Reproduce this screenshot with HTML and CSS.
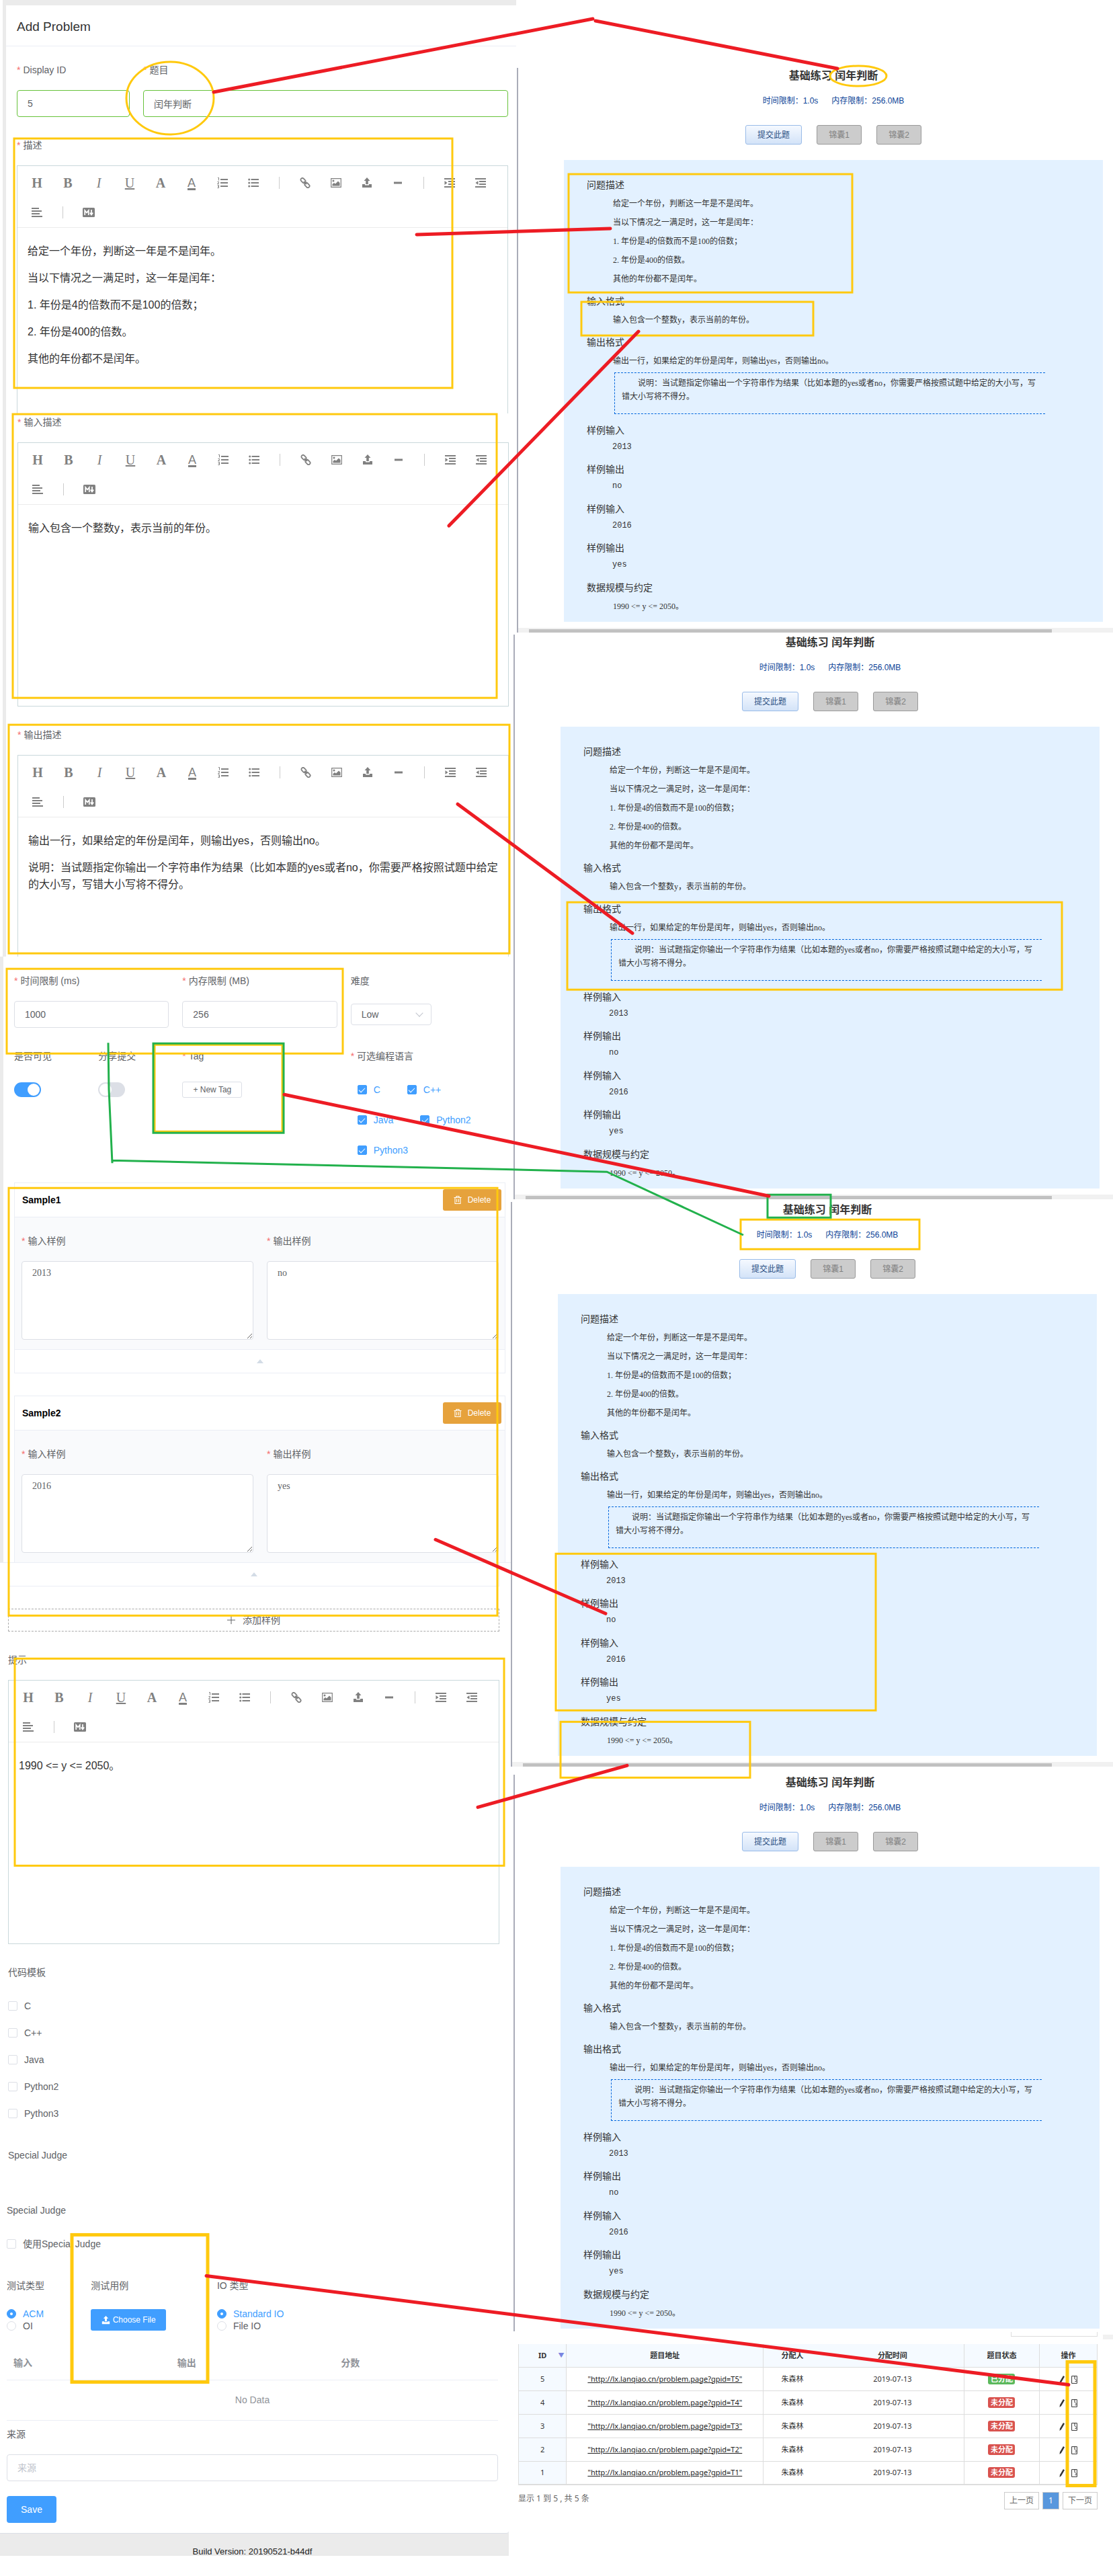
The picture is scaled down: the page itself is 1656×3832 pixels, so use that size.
FILE: index.html
```html
<!DOCTYPE html>
<html lang="zh-CN">
<head>
<meta charset="utf-8">
<title>Add Problem</title>
<link rel="stylesheet" href="styles.css">
</head>
<body>
<svg class="defs" aria-hidden="true">
  <symbol id="i-ol" viewBox="0 0 16 16"><path d="M5 2h11v2H5zM5 7h11v2H5zM5 12h11v2H5z"/><path d="M1 .5h1.500v4M.5 6.500h2v1.500l-2 1.500h2.200M.5 11.500h2v4h-2M1 13.500h1.500" fill="none" stroke="currentColor"/></symbol>
  <symbol id="i-ul" viewBox="0 0 16 16"><path d="M4.500 2H16v2H4.500zM4.500 7H16v2H4.500zM4.500 12H16v2H4.500z"/><circle cx="1.700" cy="3" r="1.500"/><circle cx="1.700" cy="8" r="1.500"/><circle cx="1.700" cy="13" r="1.500"/></symbol>
  <symbol id="i-link" viewBox="0 0 16 16"><g fill="none" stroke="currentColor" stroke-width="1.800"><rect x="1" y="2" width="8" height="5" rx="2.500" transform="rotate(45 5 4.500)"/><rect x="7" y="9" width="8" height="5" rx="2.500" transform="rotate(45 11 11.500)"/><path d="M6 6l4 4"/></g></symbol>
  <symbol id="i-image" viewBox="0 0 16 16"><path d="M.7 1.700h14.600v12.600H.7z" fill="none" stroke="currentColor" stroke-width="1.200"/><circle cx="4" cy="5" r="1.500"/><path d="M2.500 12.500V10L5 8l2 1.500L11 5.500l2.500 2.500v4.500z"/></symbol>
  <symbol id="i-upload" viewBox="0 0 16 16"><path d="M8 0l4.500 5H9.800v5H6.200V5H3.500zM1 10h4v1.500h6V10h4v5H1z"/></symbol>
  <symbol id="i-minus" viewBox="0 0 16 16"><path d="M2 6.500h12v3H2z"/></symbol>
  <symbol id="i-indent" viewBox="0 0 16 16"><path d="M0 1h16v2H0zM6 5h10v2H6zM6 9h10v2H6zM0 13h16v2H0zM.5 5l4 3-4 3z"/></symbol>
  <symbol id="i-outdent" viewBox="0 0 16 16"><path d="M0 1h16v2H0zM6 5h10v2H6zM6 9h10v2H6zM0 13h16v2H0zM4.500 5l-4 3 4 3z"/></symbol>
  <symbol id="i-align" viewBox="0 0 16 16"><path d="M0 1h11v2H0zM0 5h15v2H0zM0 9h12v2H0zM0 13h16v2H0z"/></symbol>
  <symbol id="i-md" viewBox="0 0 18 14"><rect width="18" height="14" rx="1.500"/><path d="M3.200 11V4l2.800 3.500L8.800 4v7M13 3v7M10.800 7.500l2.200 3 2.200-3" fill="none" stroke="#fff" stroke-width="1.700"/></symbol>
  <symbol id="i-trash" viewBox="0 0 12 12"><path d="M.5 2.500h11M4 2.500v-2h4v2M2 2.500v9h8v-9M4.600 4.500v5M7.400 4.500v5" fill="none" stroke="currentColor" stroke-width="1.100"/></symbol>
  <symbol id="i-pencil" viewBox="0 0 8 12"><path d="M6 0l2 1.500L3 10 .5 12 1 8.500z"/></symbol>
  <symbol id="i-page" viewBox="0 0 9 12"><path d="M.6.600h7.800v10.800H.6zM5 .6v4M5 4.500l3 3M5.500 8.500h2" fill="none" stroke="currentColor"/></symbol>
</svg>

<main class="board">
<form class="editor-side">

  <section class="strip strip-first">
    <header class="card-head"><h1>Add Problem</h1></header>
    <div class="strip-body">
      <div class="id-row">
        <div class="item"><label class="label req" for="pid">Display ID</label><input class="field ok" id="pid" value="5"></div>
        <div class="item"><label class="label req" for="ptitle">题目</label><input class="field ok" id="ptitle" value="闰年判断"></div>
      </div>
      <div class="label req">描述</div>
      <div class="editor open-end">
        <div class="toolbar">
          <button type="button"><b>H</b></button><button type="button"><b>B</b></button><button type="button"><i>I</i></button><button type="button"><u>U</u></button><button type="button"><b>A</b></button><button type="button" class="color">A</button>
          <button type="button" aria-label="ordered list"><svg><use href="#i-ol"/></svg></button><button type="button" aria-label="list"><svg><use href="#i-ul"/></svg></button><span class="sep"></span>
          <button type="button" aria-label="link"><svg><use href="#i-link"/></svg></button><button type="button" aria-label="image"><svg><use href="#i-image"/></svg></button><button type="button" aria-label="upload"><svg><use href="#i-upload"/></svg></button><button type="button" aria-label="rule"><svg><use href="#i-minus"/></svg></button><span class="sep"></span>
          <button type="button" aria-label="indent"><svg><use href="#i-indent"/></svg></button><button type="button" aria-label="outdent"><svg><use href="#i-outdent"/></svg></button><button type="button" aria-label="align"><svg><use href="#i-align"/></svg></button><span class="sep"></span>
          <button type="button" aria-label="markdown"><svg class="md"><use href="#i-md"/></svg></button>
        </div>
        <div class="content content-mid">
          <p>给定一个年份，判断这一年是不是闰年。</p>
          <p>当以下情况之一满足时，这一年是闰年：</p>
          <p>1. 年份是4的倍数而不是100的倍数；</p>
          <p>2. 年份是400的倍数。</p>
          <p>其他的年份都不是闰年。</p>
        </div>
      </div>
    </div>
  </section>

  <section class="strip strip-second">
    <div class="label label-cut req">输入描述</div>
    <div class="editor">
      <div class="toolbar">
        <button type="button"><b>H</b></button><button type="button"><b>B</b></button><button type="button"><i>I</i></button><button type="button"><u>U</u></button><button type="button"><b>A</b></button><button type="button" class="color">A</button>
        <button type="button" aria-label="ordered list"><svg><use href="#i-ol"/></svg></button><button type="button" aria-label="list"><svg><use href="#i-ul"/></svg></button><span class="sep"></span>
        <button type="button" aria-label="link"><svg><use href="#i-link"/></svg></button><button type="button" aria-label="image"><svg><use href="#i-image"/></svg></button><button type="button" aria-label="upload"><svg><use href="#i-upload"/></svg></button><button type="button" aria-label="rule"><svg><use href="#i-minus"/></svg></button><span class="sep"></span>
        <button type="button" aria-label="indent"><svg><use href="#i-indent"/></svg></button><button type="button" aria-label="outdent"><svg><use href="#i-outdent"/></svg></button><button type="button" aria-label="align"><svg><use href="#i-align"/></svg></button><span class="sep"></span>
        <button type="button" aria-label="markdown"><svg class="md"><use href="#i-md"/></svg></button>
      </div>
      <div class="content"><p>输入包含一个整数y，表示当前的年份。</p></div>
    </div>
    <div class="label req after">输出描述</div>
    <div class="editor open-end">
      <div class="toolbar">
        <button type="button"><b>H</b></button><button type="button"><b>B</b></button><button type="button"><i>I</i></button><button type="button"><u>U</u></button><button type="button"><b>A</b></button><button type="button" class="color">A</button>
        <button type="button" aria-label="ordered list"><svg><use href="#i-ol"/></svg></button><button type="button" aria-label="list"><svg><use href="#i-ul"/></svg></button><span class="sep"></span>
        <button type="button" aria-label="link"><svg><use href="#i-link"/></svg></button><button type="button" aria-label="image"><svg><use href="#i-image"/></svg></button><button type="button" aria-label="upload"><svg><use href="#i-upload"/></svg></button><button type="button" aria-label="rule"><svg><use href="#i-minus"/></svg></button><span class="sep"></span>
        <button type="button" aria-label="indent"><svg><use href="#i-indent"/></svg></button><button type="button" aria-label="outdent"><svg><use href="#i-outdent"/></svg></button><button type="button" aria-label="align"><svg><use href="#i-align"/></svg></button><span class="sep"></span>
        <button type="button" aria-label="markdown"><svg class="md"><use href="#i-md"/></svg></button>
      </div>
      <div class="content content-short">
        <p>输出一行，如果给定的年份是闰年，则输出yes，否则输出no。</p>
        <p>说明：当试题指定你输出一个字符串作为结果（比如本题的yes或者no，你需要严格按照试题中给定的大小写，写错大小写将不得分。</p>
      </div>
    </div>
  </section>

  <section class="strip strip-third">
    <div class="grid6">
      <div class="span2"><label class="label req" for="time">时间限制 (ms)</label><input class="field" id="time" value="1000"></div>
      <div class="span2"><label class="label req" for="mem">内存限制 (MB)</label><input class="field" id="mem" value="256"></div>
      <div class="span2"><label class="label" for="level">难度</label>
        <div class="line"><span class="select-wrap"><select id="level"><option>Low</option></select></span></div></div>
    </div>
    <div class="grid6 after">
      <div><label class="label" for="visible">是否可见</label><div class="line"><input class="switch" type="checkbox" id="visible" checked></div></div>
      <div><label class="label" for="share">分享提交</label><div class="line"><input class="switch" type="checkbox" id="share"></div></div>
      <div class="span2"><div class="label req">Tag</div><div class="line"><button type="button" class="btn-tag">+ New Tag</button></div></div>
      <div class="span2"><div class="label req">可选编程语言</div>
        <div class="langs">
          <label class="check on"><input type="checkbox" checked>C</label><label class="check on"><input type="checkbox" checked>C++</label>
          <label class="check on"><input type="checkbox" checked>Java</label><label class="check on"><input type="checkbox" checked>Python2</label>
          <label class="check on"><input type="checkbox" checked>Python3</label>
        </div></div>
    </div>
    <div class="accordion">
      <div class="acc-head"><h2>Sample1</h2><button type="button" class="btn-del"><svg><use href="#i-trash"/></svg>Delete</button></div>
      <div class="acc-body">
        <div><label class="label req" for="in1">输入样例</label><textarea id="in1">2013</textarea></div>
        <div><label class="label req" for="out1">输出样例</label><textarea id="out1">no</textarea></div>
      </div>
      <div class="acc-foot"><span class="tri"></span></div>
    </div>
    <div class="accordion acc-last">
      <div class="acc-head"><h2>Sample2</h2><button type="button" class="btn-del"><svg><use href="#i-trash"/></svg>Delete</button></div>
      <div class="acc-body">
        <div><label class="label req" for="in2">输入样例</label><textarea id="in2">2016</textarea></div>
        <div><label class="label req" for="out2">输出样例</label><textarea id="out2">yes</textarea></div>
      </div>
    </div>
  </section>

  <section class="strip strip-fourth">
    <div class="acc-foot acc-tail"><span class="tri"></span></div>
    <button type="button" class="btn-add"><svg viewBox="0 0 12 12"><path d="M6 0v12M0 6h12" stroke="currentColor"/></svg>添加样例</button>
    <div class="label after">提示</div>
    <div class="editor">
      <div class="toolbar">
        <button type="button"><b>H</b></button><button type="button"><b>B</b></button><button type="button"><i>I</i></button><button type="button"><u>U</u></button><button type="button"><b>A</b></button><button type="button" class="color">A</button>
        <button type="button" aria-label="ordered list"><svg><use href="#i-ol"/></svg></button><button type="button" aria-label="list"><svg><use href="#i-ul"/></svg></button><span class="sep"></span>
        <button type="button" aria-label="link"><svg><use href="#i-link"/></svg></button><button type="button" aria-label="image"><svg><use href="#i-image"/></svg></button><button type="button" aria-label="upload"><svg><use href="#i-upload"/></svg></button><button type="button" aria-label="rule"><svg><use href="#i-minus"/></svg></button><span class="sep"></span>
        <button type="button" aria-label="indent"><svg><use href="#i-indent"/></svg></button><button type="button" aria-label="outdent"><svg><use href="#i-outdent"/></svg></button><button type="button" aria-label="align"><svg><use href="#i-align"/></svg></button><span class="sep"></span>
        <button type="button" aria-label="markdown"><svg class="md"><use href="#i-md"/></svg></button>
      </div>
      <div class="content"><p>1990 &lt;= y &lt;= 2050。</p></div>
    </div>
    <div class="label after">代码模板</div>
    <div class="stack">
      <label class="check"><input type="checkbox">C</label>
      <label class="check"><input type="checkbox">C++</label>
      <label class="check"><input type="checkbox">Java</label>
      <label class="check"><input type="checkbox">Python2</label>
      <label class="check"><input type="checkbox">Python3</label>
    </div>
    <div class="label after">Special Judge</div>
  </section>

  <section class="strip-fifth">
    <div class="last-card">
      <div class="label">Special Judge</div>
      <div class="stack"><label class="check"><input type="checkbox">使用Special Judge</label></div>
      <div class="grid12 after">
        <div class="c2"><div class="label">测试类型</div>
          <div class="radios"><label class="check on"><input type="radio" name="rule" checked>ACM</label><label class="check"><input type="radio" name="rule">OI</label></div></div>
        <div class="c3"><div class="label">测试用例</div>
          <button type="button" class="btn-file"><svg><use href="#i-upload"/></svg>Choose File</button></div>
        <div class="c7"><div class="label">IO 类型</div>
          <div class="radios"><label class="check on"><input type="radio" name="io" checked>Standard IO</label><label class="check"><input type="radio" name="io">File IO</label></div></div>
      </div>
      <table class="cases">
        <thead><tr><th>输入</th><th>输出</th><th>分数</th></tr></thead>
        <tbody><tr><td colspan="3">No Data</td></tr></tbody>
      </table>
      <label class="label" for="source">来源</label>
      <input class="field" id="source" placeholder="来源">
      <button type="button" class="btn-save">Save</button>
    </div>
    <footer>Build Version: 20190521-b44df</footer>
  </section>
</form>

<div class="source-side">
  <article class="frame frame-a">
    <div class="sheet">
      <h2>基础练习 闰年判断</h2>
      <div class="limits"><span>时间限制：1.0s</span><span>内存限制：256.0MB</span></div>
      <div class="actions"><button type="button">提交此题</button><button type="button" disabled>锦囊1</button><button type="button" disabled>锦囊2</button></div>
      <div class="problem">
        <h3>问题描述</h3>
        <div class="para"><p>给定一个年份，判断这一年是不是闰年。</p><p>当以下情况之一满足时，这一年是闰年：</p><p>1. 年份是4的倍数而不是100的倍数；</p><p>2. 年份是400的倍数。</p><p>其他的年份都不是闰年。</p></div>
        <h3>输入格式</h3>
        <div class="para"><p>输入包含一个整数y，表示当前的年份。</p></div>
        <h3>输出格式</h3>
        <div class="para"><p>输出一行，如果给定的年份是闰年，则输出yes，否则输出no。</p></div>
        <div class="note">说明：当试题指定你输出一个字符串作为结果（比如本题的yes或者no，你需要严格按照试题中给定的大小写，写错大小写将不得分。</div>
        <h3>样例输入</h3><pre>2013</pre>
        <h3>样例输出</h3><pre class="out">no</pre>
        <h3>样例输入</h3><pre>2016</pre>
        <h3>样例输出</h3><pre class="out">yes</pre>
        <h3>数据规模与约定</h3>
        <div class="para"><p>1990 &lt;= y &lt;= 2050。</p></div>
      </div>
    </div>
    <div class="scroll"><span></span></div>
  </article>

  <article class="frame frame-b">
    <div class="sheet">
      <h2>基础练习 闰年判断</h2>
      <div class="limits"><span>时间限制：1.0s</span><span>内存限制：256.0MB</span></div>
      <div class="actions"><button type="button">提交此题</button><button type="button" disabled>锦囊1</button><button type="button" disabled>锦囊2</button></div>
      <div class="problem">
        <h3>问题描述</h3>
        <div class="para"><p>给定一个年份，判断这一年是不是闰年。</p><p>当以下情况之一满足时，这一年是闰年：</p><p>1. 年份是4的倍数而不是100的倍数；</p><p>2. 年份是400的倍数。</p><p>其他的年份都不是闰年。</p></div>
        <h3>输入格式</h3>
        <div class="para"><p>输入包含一个整数y，表示当前的年份。</p></div>
        <h3>输出格式</h3>
        <div class="para"><p>输出一行，如果给定的年份是闰年，则输出yes，否则输出no。</p></div>
        <div class="note">说明：当试题指定你输出一个字符串作为结果（比如本题的yes或者no，你需要严格按照试题中给定的大小写，写错大小写将不得分。</div>
        <h3>样例输入</h3><pre>2013</pre>
        <h3>样例输出</h3><pre class="out">no</pre>
        <h3>样例输入</h3><pre>2016</pre>
        <h3>样例输出</h3><pre class="out">yes</pre>
        <h3>数据规模与约定</h3>
        <div class="para"><p>1990 &lt;= y &lt;= 2050。</p></div>
      </div>
    </div>
    <div class="scroll"><span></span></div>
  </article>

  <article class="frame frame-c">
    <div class="sheet">
      <h2>基础练习 闰年判断</h2>
      <div class="limits"><span>时间限制：1.0s</span><span>内存限制：256.0MB</span></div>
      <div class="actions"><button type="button">提交此题</button><button type="button" disabled>锦囊1</button><button type="button" disabled>锦囊2</button></div>
      <div class="problem">
        <h3>问题描述</h3>
        <div class="para"><p>给定一个年份，判断这一年是不是闰年。</p><p>当以下情况之一满足时，这一年是闰年：</p><p>1. 年份是4的倍数而不是100的倍数；</p><p>2. 年份是400的倍数。</p><p>其他的年份都不是闰年。</p></div>
        <h3>输入格式</h3>
        <div class="para"><p>输入包含一个整数y，表示当前的年份。</p></div>
        <h3>输出格式</h3>
        <div class="para"><p>输出一行，如果给定的年份是闰年，则输出yes，否则输出no。</p></div>
        <div class="note">说明：当试题指定你输出一个字符串作为结果（比如本题的yes或者no，你需要严格按照试题中给定的大小写，写错大小写将不得分。</div>
        <h3>样例输入</h3><pre>2013</pre>
        <h3>样例输出</h3><pre class="out">no</pre>
        <h3>样例输入</h3><pre>2016</pre>
        <h3>样例输出</h3><pre class="out">yes</pre>
        <h3>数据规模与约定</h3>
        <div class="para"><p>1990 &lt;= y &lt;= 2050。</p></div>
      </div>
    </div>
    <div class="scroll"><span></span></div>
  </article>

  <article class="frame frame-d">
    <div class="sheet">
      <h2>基础练习 闰年判断</h2>
      <div class="limits"><span>时间限制：1.0s</span><span>内存限制：256.0MB</span></div>
      <div class="actions"><button type="button">提交此题</button><button type="button" disabled>锦囊1</button><button type="button" disabled>锦囊2</button></div>
      <div class="problem">
        <h3>问题描述</h3>
        <div class="para"><p>给定一个年份，判断这一年是不是闰年。</p><p>当以下情况之一满足时，这一年是闰年：</p><p>1. 年份是4的倍数而不是100的倍数；</p><p>2. 年份是400的倍数。</p><p>其他的年份都不是闰年。</p></div>
        <h3>输入格式</h3>
        <div class="para"><p>输入包含一个整数y，表示当前的年份。</p></div>
        <h3>输出格式</h3>
        <div class="para"><p>输出一行，如果给定的年份是闰年，则输出yes，否则输出no。</p></div>
        <div class="note">说明：当试题指定你输出一个字符串作为结果（比如本题的yes或者no，你需要严格按照试题中给定的大小写，写错大小写将不得分。</div>
        <h3>样例输入</h3><pre>2013</pre>
        <h3>样例输出</h3><pre class="out">no</pre>
        <h3>样例输入</h3><pre>2016</pre>
        <h3>样例输出</h3><pre class="out">yes</pre>
        <h3>数据规模与约定</h3>
        <div class="para"><p>1990 &lt;= y &lt;= 2050。</p></div>
      </div>
    </div>
  </article>

  <div class="cut-row"><span class="cut-box"></span><span class="cut-track"></span></div>

  <section class="listing">
    <table class="tasks">
      <colgroup><col class="w-id"><col class="w-url"><col class="w-who"><col class="w-date"><col class="w-state"><col class="w-ops"></colgroup>
      <thead><tr><th>ID<span class="sort">▼</span></th><th>题目地址</th><th>分配人</th><th>分配时间</th><th>题目状态</th><th>操作</th></tr></thead>
      <tbody>
        <tr><td>5</td><td><a href="#t5">"http://lx.lanqiao.cn/problem.page?gpid=T5"</a></td><td>朱森林</td><td>2019-07-13</td><td><span class="badge done">已分配</span></td><td><svg class="pencil"><use href="#i-pencil"/></svg><svg class="pageicon"><use href="#i-page"/></svg></td></tr>
        <tr><td>4</td><td><a href="#t4">"http://lx.lanqiao.cn/problem.page?gpid=T4"</a></td><td>朱森林</td><td>2019-07-13</td><td><span class="badge">未分配</span></td><td><svg class="pencil"><use href="#i-pencil"/></svg><svg class="pageicon"><use href="#i-page"/></svg></td></tr>
        <tr><td>3</td><td><a href="#t3">"http://lx.lanqiao.cn/problem.page?gpid=T3"</a></td><td>朱森林</td><td>2019-07-13</td><td><span class="badge">未分配</span></td><td><svg class="pencil"><use href="#i-pencil"/></svg><svg class="pageicon"><use href="#i-page"/></svg></td></tr>
        <tr><td>2</td><td><a href="#t2">"http://lx.lanqiao.cn/problem.page?gpid=T2"</a></td><td>朱森林</td><td>2019-07-13</td><td><span class="badge">未分配</span></td><td><svg class="pencil"><use href="#i-pencil"/></svg><svg class="pageicon"><use href="#i-page"/></svg></td></tr>
        <tr><td>1</td><td><a href="#t1">"http://lx.lanqiao.cn/problem.page?gpid=T1"</a></td><td>朱森林</td><td>2019-07-13</td><td><span class="badge">未分配</span></td><td><svg class="pencil"><use href="#i-pencil"/></svg><svg class="pageicon"><use href="#i-page"/></svg></td></tr>
      </tbody>
    </table>
    <div class="pager"><span>显示 1 到 5 , 共 5 条</span><nav><a href="#prev">上一页</a><a href="#p1" class="current">1</a><a href="#next">下一页</a></nav></div>
  </section>
</div>

<svg class="marks" viewBox="0 0 1656 3832" preserveAspectRatio="none" aria-hidden="true">
  <g class="yellow">
    <ellipse cx="253" cy="146" rx="65" ry="54"/>
    <rect x="21" y="206" width="652" height="371"/>
    <rect x="19" y="616" width="720" height="422"/>
    <rect x="13" y="1078" width="745" height="340"/>
    <rect x="10" y="1441" width="500" height="126"/>
    <rect x="230" y="1554" width="190" height="129"/>
    <rect x="13" y="1767" width="727" height="636"/>
    <rect x="22" y="2467" width="728" height="308"/>
    <ellipse cx="1277" cy="113" rx="42" ry="15"/>
    <rect x="846" y="259" width="422" height="176"/>
    <rect x="865" y="449" width="345" height="50"/>
    <rect x="844" y="1342" width="736" height="130"/>
    <rect x="1102" y="1814" width="266" height="44"/>
    <rect x="827" y="2311" width="476" height="233"/>
    <rect x="834" y="2561" width="282" height="83"/>
    <rect class="thick" x="107" y="3324" width="202" height="219"/>
    <rect class="thick" x="1588" y="3513" width="41" height="184"/>
  </g>
  <g class="green">
    <rect x="228" y="1552" width="194" height="133"/>
    <rect x="1142" y="1777" width="94" height="34"/>
    <path d="M161 1551L162 1620L167 1730V1726L780 1740L903 1743L1106 1837"/>
  </g>
  <g class="red">
    <path d="M318 137L882 28M886 31L1246 102M620 349L908 340M668 782L950 493M681 1196L941 1388M423 1628L1144 1779M648 2290L901 2400M711 2688L933 2626M307 3385L1590 3547"/>
  </g>
</svg>
</main>
</body>
</html>
```
FILE: styles.css
```css
* { box-sizing: border-box; }
body, h1, h2, h3, p, pre { margin: 0; }
body { background: #fff; color: #606266; font: 14px/20px "Liberation Sans", "Noto Sans CJK SC", sans-serif; }
button, input, select, textarea { font: inherit; color: inherit; margin: 0; }
button { display: flex; align-items: center; justify-content: center; padding: 0; }
svg { fill: currentColor; }
.defs { display: none; }

.board { position: relative; display: grid; grid-template-columns: minmax(0, 760fr) minmax(0, 896fr); align-items: start; padding-bottom: 31px; }
.marks { position: absolute; inset: 0; width: 100%; height: 100%; fill: none; pointer-events: none; stroke-width: 3; }
.marks .yellow { stroke: #ffc90e; }
.marks .green { stroke: #22b14c; }
.marks .red { stroke: #ed1c24; stroke-width: 5; stroke-linecap: round; }
.marks .thick { stroke-width: 5; }

/* strips of the form */
.strip { border-left: 5px solid #ebebeb; background: #fff; }
.strip-first { margin: 0 -8px 0 4px; border-top: 8px solid #ebebeb; }
.card-head { height: 61px; padding-left: 16px; border-bottom: 1px solid #ebeef5; }
.card-head h1 { color: #333; font-size: 19px; line-height: 64px; font-weight: 400; }
.strip-body { padding: 15px 12px 0 16px; }
.strip-second { margin-left: 4px; padding: 0 3px 0 17px; }
.strip-third { padding: 16px 8px 0 16px; }
.strip-fourth { border-left: 0; border-top: 1px solid #ebeef5; padding: 0 17px 32px 12px; }
.strip-fifth { margin-right: 3px; background: #ebebeb; }
.last-card { padding: 0 16px 15px 10px; background: #fff; border-bottom: 1px solid #dcdfe6; border-bottom-right-radius: 4px; }
.strip-fifth footer { height: 33px; overflow: hidden; padding: 17px 6px 0 0; color: #222; font-size: 13px; text-align: center; }

.after { margin-top: 22px; }
.label { display: block; padding-bottom: 10px; line-height: 40px; }
.label-cut { padding-bottom: 17px; line-height: 26px; }
.req::before { content: "*"; margin-right: 4px; color: #f56c6c; }
.field { display: block; width: 100%; height: 40px; padding: 0 15px; border: 1px solid #dcdfe6; border-radius: 4px; background: #fff; outline: 0; }
.field.ok { border-color: #67c23a; }
.field::placeholder { color: #c0c4cc; }
.id-row { display: grid; grid-template-columns: 168fr 543fr; gap: 20px; margin-bottom: 22px; }
.grid6 { display: grid; grid-template-columns: repeat(6, minmax(0, 1fr)); column-gap: 20px; }
.span2 { grid-column: span 2; }
.grid12 { display: grid; grid-template-columns: repeat(12, minmax(0, 1fr)); column-gap: 20px; }
.c2 { grid-column: span 2; }
.c3 { grid-column: span 3; }
.c7 { grid-column: span 7; }
.line { display: flex; align-items: center; height: 40px; }

/* rich text editor */
.editor { border: 1px solid #c9d8db; color: #333; font-size: 16px; }
.open-end { border-bottom: 0; }
.toolbar { display: flex; flex-wrap: wrap; padding: 3px 6px 0; border-bottom: 1px solid #ebebeb; color: #808080; }
.toolbar button { width: 46px; height: 44px; border: 0; background: none; font: 20px/20px "Liberation Serif", serif; }
.toolbar .color { font-family: "Liberation Sans", sans-serif; font-size: 18px; text-decoration: underline; text-decoration-thickness: 3px; text-underline-offset: 2px; }
.toolbar svg { width: 16px; height: 16px; }
.toolbar .md { width: 18px; height: 14px; }
.sep { width: 31px; height: 44px; background: linear-gradient(#ccc, #ccc) center / 1px 18px no-repeat; }
.content { min-height: 299px; padding: 22px 15px 0; }
.content-mid { min-height: 276px; }
.content-short { min-height: 207px; }
.content p { margin-bottom: 15px; line-height: 25px; }

/* controls */
.select-wrap { position: relative; width: 120px; }
.select-wrap select { width: 100%; height: 32px; padding: 0 15px; border: 1px solid #dcdfe6; border-radius: 4px; background: #fff; appearance: none; }
.select-wrap::after { content: ""; position: absolute; right: 14px; top: 10px; width: 7px; height: 7px; border: solid #c0c4cc; border-width: 0 1px 1px 0; transform: rotate(45deg); }
.switch { appearance: none; display: flex; width: 40px; height: 22px; padding: 2px; border-radius: 11px; background: #dcdfe6; }
.switch::after { content: ""; width: 18px; height: 18px; border-radius: 50%; background: #fff; }
.switch:checked { justify-content: flex-end; background: #409eff; }
.btn-tag { width: 89px; height: 24px; border: 1px solid #dcdfe6; border-radius: 3px; background: #fff; font-size: 12px; }
.check { display: inline-flex; align-items: center; gap: 10px; line-height: 20px; }
.check.on { color: #409eff; }
.check input { appearance: none; display: grid; place-items: center; width: 14px; height: 14px; border: 1px solid #dcdfe6; border-radius: 2px; background: #fff; }
.check input:checked { border-color: #409eff; background: #409eff; }
.check input:checked::after { content: ""; width: 4px; height: 8px; margin-bottom: 2px; border: solid #fff; border-width: 0 1px 1px 0; transform: rotate(45deg); }
.check input[type="radio"] { border-radius: 50%; }
.check input[type="radio"]:checked::after { width: 4px; height: 4px; margin: 0; border: 0; border-radius: 50%; background: #fff; }
.langs { display: flex; flex-wrap: wrap; gap: 5px 40px; padding: 0 20px 0 10px; }
.langs .check { height: 40px; }
.stack { display: grid; }
.stack .check { height: 40px; }
.radios { display: grid; padding-top: 3px; }
.radios .check { line-height: 18px; }

/* sample blocks */
.accordion { margin-top: 28px; border: 1px solid #ebeef5; }
.acc-last { margin-top: 33px; border-bottom: 0; }
.acc-head { display: flex; align-items: center; justify-content: space-between; height: 51px; padding: 0 5px 0 11px; border-bottom: 1px solid #ebeef5; }
.acc-head h2 { color: #000; font-size: 14px; }
.btn-del { gap: 9px; width: 87px; height: 32px; border: 0; border-radius: 3px; background: #e6a23c; color: #fff; font-size: 12px; }
.btn-del svg { width: 12px; height: 12px; }
.acc-body { display: grid; grid-template-columns: 1fr 1fr; gap: 20px; padding: 15px 9px 14px 10px; background: #f9fafc; }
.acc-body textarea { display: block; width: 100%; height: 117px; padding: 7px 15px; border: 1px solid #dcdfe6; border-radius: 4px; background: #fff; font: 14px/20px "Liberation Serif", serif; }
.acc-foot { display: grid; place-items: center; height: 35px; border-top: 1px solid #ebeef5; }
.tri { border: solid transparent; border-width: 0 5px 6px; border-bottom-color: #d3dce6; }
.acc-tail { border: solid #ebeef5; border-width: 0 1px 1px; }
.btn-add { gap: 11px; width: 100%; height: 34px; margin-top: 33px; border: 1px dashed #aaa; background: #fff; }
.btn-add svg { width: 12px; height: 12px; }

.btn-file { gap: 4px; width: 112px; height: 32px; margin: 5px 0 24px; border: 0; border-radius: 3px; background: #409eff; color: #fff; font-size: 12px; }
.btn-file svg { width: 13px; height: 13px; }
.cases { width: 100%; border-collapse: collapse; table-layout: fixed; color: #909399; }
.cases th { height: 49px; padding: 0 10px; border-bottom: 1px solid #ebeef5; text-align: left; }
.cases td { height: 60px; padding: 0; border-bottom: 1px solid #ebeef5; text-align: center; }
.btn-save { width: 74px; height: 40px; margin-top: 22px; border: 0; border-radius: 4px; background: #409eff; color: #fff; }

/* source problem pages */
.source-side { padding-top: 101px; color: #333; }
.frame { border-left: 2px solid #a9acb8; }
.frame-a { margin: 0 0 3px 9px; }
.frame-b { margin: 0 0 4px 4px; }
.frame-c { margin: 0 0 12px; }
.frame-d { margin: 0 0 1px 4px; padding-bottom: 4px; }
.sheet { margin: 0 15px 0 68px; }
.frame-b .sheet, .frame-d .sheet { margin-right: 20px; }
.frame-c .sheet { margin-right: 24px; }
.sheet h2 { font-size: 16px; line-height: 24px; text-align: center; }
.limits { display: flex; justify-content: center; gap: 20px; margin: 15px 0 26px; color: #0b4397; font-size: 12px; }
.actions { display: flex; justify-content: center; gap: 22px; margin-bottom: 23px; }
.actions button { width: 84px; height: 29px; border: 1px solid #99bbe8; border-radius: 3px; background: linear-gradient(#f5f9ff, #d3e3f8); color: #2b5083; font-size: 12px; }
.actions button:disabled { width: 67px; border-color: #999; background: #ccc; color: #808080; }
.problem { padding: 28px 0 9px 34px; background: #e3f1ff; font: 12px/28px "Liberation Serif", "Noto Sans CJK SC", serif; }
.problem h3 { font-size: 14px; line-height: 20px; font-weight: 400; }
.para { padding: 3px 0 10px 39px; }
.para:has(+ .note) { padding-bottom: 3px; }
.para:last-child { padding-bottom: 0; }
.note { margin: 0 86px 15px 41px; padding: 5px 10px 15px; border: 1px dashed #06d; border-right: 0; line-height: 20px; text-indent: 24px; }
.problem pre { padding: 4px 0 14px 38px; font: 12px/20px "Liberation Mono", monospace; }
.problem .out { padding-bottom: 15px; }
.scroll { height: 7px; margin-top: 9px; padding: 2px 91px 0 16px; background: #f1f1f1; }
.scroll span { display: block; height: 5px; background: #c1c1c1; }

/* assignment list */
.cut-row { display: flex; justify-content: flex-end; gap: 8px; height: 18px; }
.cut-box { width: 129px; height: 7px; border: 1px solid #ddd; border-top: 0; }
.cut-track { width: 15px; height: 7px; margin-top: 4px; background: #f1f1f1; }
.listing { margin: 0 23px 0 11px; font: 11px/16px "Noto Sans", "Noto Sans CJK SC", sans-serif; }
.tasks { width: 100%; border-collapse: collapse; table-layout: fixed; border: 1px solid #ddd; border-width: 0 1px 2px; text-align: center; }
.tasks th, .tasks td { height: 35px; padding: 0; border: 1px solid #ddd; }
.tasks th { position: relative; height: 34px; border-top: 0; background: #f5faff; }
.tasks td:first-child { background: #f5faff; }
.tasks th:nth-child(3), .tasks td:nth-child(3) { border-right: 0; }
.tasks th:nth-child(4), .tasks td:nth-child(4) { border-left: 0; }
.tasks a { color: #222; }
.w-id { width: 8.3%; }
.w-url { width: 34%; }
.w-who { width: 10%; }
.w-date { width: 24.7%; }
.w-state { width: 13%; }
.w-ops { width: 10%; }
.sort { position: absolute; right: 3px; color: #7a85e0; font-size: 9px; font-weight: 400; }
.badge { display: inline-block; width: 40px; border-radius: 3px; background: #d9534f; color: #fff; font-weight: 700; }
.badge.done { background: #5cb85c; }
.pencil, .pageicon { height: 12px; vertical-align: middle; }
.pencil { width: 8px; margin-right: 10px; }
.pageicon { width: 9px; }
.pager { display: flex; justify-content: space-between; margin-top: 10px; color: #666; font-size: 12px; line-height: 20px; }
.pager nav { display: flex; gap: 5px; }
.pager a { padding: 2px 7px; border: 1px solid #ccc; color: #666; text-decoration: none; }
.pager .current { padding: 2px 8px; background: #5897dd; color: #fff; }
```
